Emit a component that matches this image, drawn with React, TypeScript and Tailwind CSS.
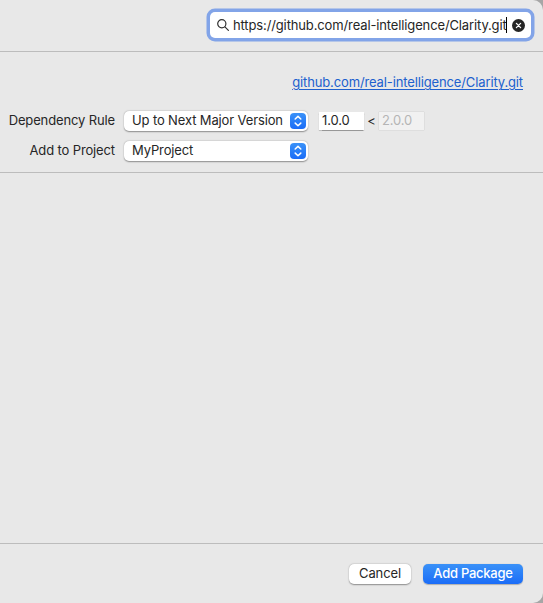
import type { ReactNode } from "react";

function PopUpButton({ children }: { children: ReactNode }) {
  return (
    <div className="flex h-5 w-[184px] items-center justify-between rounded-[5px] bg-white pl-2 pr-0.5 shadow-[0_0.5px_1.5px_rgba(0,0,0,0.4)]">
      <span className="whitespace-nowrap pb-0.5">{children}</span>
      <span className="flex size-4 items-center justify-center rounded-[4px] bg-linear-to-b from-[#3a91f8] to-[#1b6cf7]">
        <svg width="16" height="16" viewBox="0 0 16 16" fill="none" stroke="white" strokeWidth="1.5" strokeLinecap="round" strokeLinejoin="round">
          <path d="M5.2 6 8 3.4 10.8 6M5.2 10.1 8 12.7l2.8-2.6" />
        </svg>
      </span>
    </div>
  );
}

export default function App() {
  return (
    <div className="h-[603px] w-[543px] overflow-hidden bg-[#a6a6a6] font-['Inter',sans-serif] text-[13px] leading-4 tracking-[-0.13px] text-[#262626]">
      <div className="flex h-full flex-col rounded-r-[10px] bg-[#e8e8e8]">
        <header className="flex h-[52px] shrink-0 justify-end border-b border-[#bcbcbc] pr-3 pt-3">
          <div className="flex h-[26px] w-[321px] items-center rounded-[5px] bg-white pl-[7px] pr-[6px] ring-[3.5px] ring-[#82a4e8]">
            <svg className="mr-1 shrink-0" width="12" height="12" viewBox="0 0 12 12" fill="none" stroke="#303030" strokeWidth="1.2" strokeLinecap="round">
              <circle cx="4.8" cy="4.8" r="4.1" />
              <path d="m7.9 7.9 3.5 3.5" />
            </svg>
            <span className="w-[273px] whitespace-nowrap pb-px">https://github.com/real-intelligence/Clarity.git</span>
            <span className="h-4 w-px shrink-0 bg-black" />
            <svg className="ml-[5px] shrink-0" width="13" height="13" viewBox="0 0 13 13">
              <circle cx="6.5" cy="6.5" r="6.5" fill="#262626" />
              <path d="m4.4 4.4 4.2 4.2m0-4.2L4.4 8.6" stroke="white" strokeWidth="1.3" strokeLinecap="round" />
            </svg>
          </div>
        </header>

        <section className="h-[121px] shrink-0 border-b border-[#bcbcbc] pt-[22px]">
          <div className="flex justify-end pr-5">
            <a className="whitespace-nowrap text-[#2060ce] underline decoration-1 underline-offset-2">github.com/real-intelligence/Clarity.git</a>
          </div>
          <div className="mt-[21px] flex h-5 items-center">
            <span className="mr-[9px] w-[115px] whitespace-nowrap pb-0.5 text-right">Dependency Rule</span>
            <PopUpButton>Up to Next Major Version</PopUpButton>
            <span className="ml-[11px] flex h-[18px] w-[45px] items-center bg-white pb-0.5 pl-[3px] shadow-[0_0.5px_1px_rgba(0,0,0,0.35)]">1.0.0</span>
            <span className="w-[15px] text-center">&lt;</span>
            <span className="flex h-[18px] w-[45px] items-center bg-[#f1f1f1] pb-0.5 pl-[3px] text-[#b5b5b5] shadow-[0_0_1px_rgba(0,0,0,0.25)]">2.0.0</span>
          </div>
          <div className="mt-2.5 flex h-5 items-center">
            <span className="mr-[9px] w-[115px] whitespace-nowrap pb-0.5 text-right">Add to Project</span>
            <PopUpButton>MyProject</PopUpButton>
          </div>
        </section>

        <main className="flex-1" />

        <footer className="flex h-[60px] shrink-0 justify-end gap-3 border-t border-[#bcbcbc] pr-5 pt-5">
          <button className="h-5 w-[62px] rounded-[5px] bg-white pb-0.5 shadow-[0_0.5px_1.5px_rgba(0,0,0,0.4)]">Cancel</button>
          <button className="h-5 w-[100px] whitespace-nowrap rounded-[5px] bg-linear-to-b from-[#3a91f8] to-[#1b6cf7] pb-0.5 font-medium tracking-[-0.25px] text-white shadow-[0_0.5px_1px_rgba(0,0,0,0.25)]">Add Package</button>
        </footer>
      </div>
    </div>
  );
}
